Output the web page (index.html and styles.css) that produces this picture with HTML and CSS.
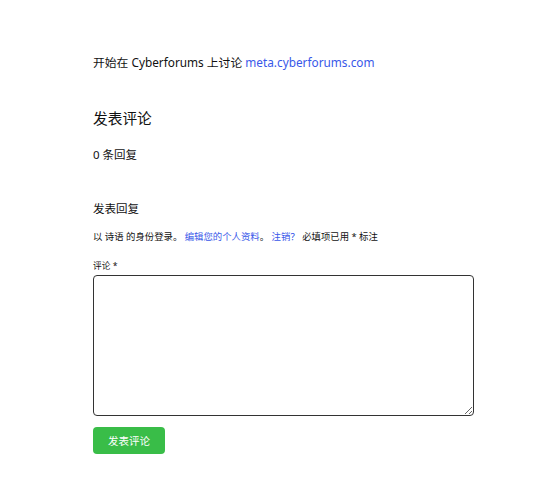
FILE: index.html
```html
<!DOCTYPE html>
<html lang="zh-CN">
<head>
<meta charset="utf-8">
<title>发表评论</title>
<link rel="stylesheet" href="styles.css">
</head>
<body>
<main class="wrap">
  <p class="intro">开始在 Cyberforums 上讨论 <a href="#">meta.cyberforums.com</a></p>
  <h2 class="title">发表评论</h2>
  <p class="count">0 条回复</p>
  <section class="respond">
    <h3 class="reply-title">发表回复</h3>
    <p class="logged">以 诗语 的身份登录。 <a href="#">编辑您的个人资料</a>。 <a href="#">注销？</a> 必填项已用 * 标注</p>
    <label class="label" for="c">评论 *</label>
    <textarea id="c" class="box"></textarea>
    <button class="submit" type="button">发表评论</button>
  </section>
</main>
</body>
</html>
```
FILE: styles.css
```css
body {
  margin: 0;
  background: #fff;
  color: #111;
  font-family: "Noto Sans", "Noto Sans CJK SC", sans-serif;
}
.wrap {
  width: 381px;
  padding: 53px 0 0 93px;
}
a { color: #3858e9; text-decoration: none; }
.intro {
  margin: 0;
  font-size: 11.8px;
  line-height: 18px;
}
.title {
  margin: 37px 0 0;
  font-size: 14.7px;
  font-weight: 400;
  line-height: 20px;
}
.count {
  margin: 18px 0 0;
  font-size: 11.5px;
  line-height: 18px;
}
.respond { margin-top: 36px; }
.reply-title {
  margin: 0;
  font-size: 11.5px;
  font-weight: 400;
  line-height: 18px;
}
.logged {
  margin: 12px 0 0;
  font-size: 9.4px;
  line-height: 14px;
}
.label {
  display: block;
  margin-top: 16px;
  font-size: 8.7px;
  line-height: 12px;
}
.box {
  display: block;
  box-sizing: border-box;
  width: 381px;
  height: 141px;
  margin-top: 3px;
  border: 1px solid #333;
  border-bottom-width: 1.5px;
  border-radius: 4px;
  padding: 6px;
  font: inherit;
}
.submit {
  display: block;
  margin-top: 11px;
  width: 72px;
  height: 27px;
  padding: 0;
  border: 0;
  border-radius: 4px;
  background: #39bd48;
  color: #fff;
  font-family: inherit;
  font-size: 10.5px;
}
```
